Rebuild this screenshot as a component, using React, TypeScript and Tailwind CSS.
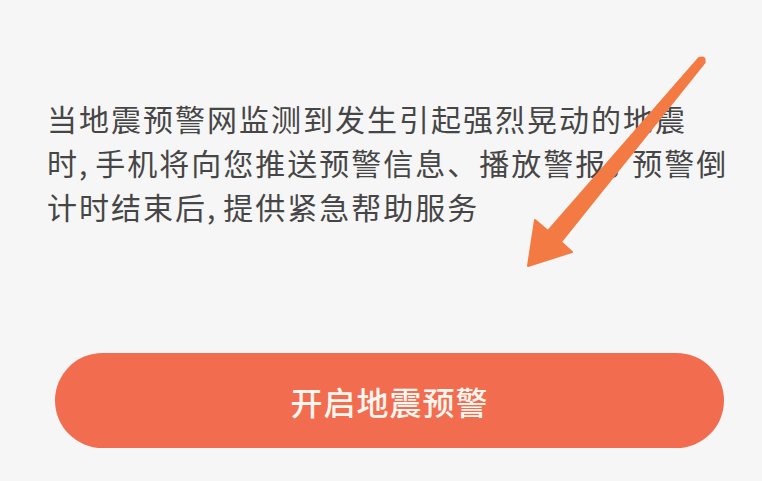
import React from "react";

export default function App() {
  const font = '"Noto Sans CJK SC", "Noto Sans", sans-serif';
  return (
    <div className="relative w-[762px] h-[481px] overflow-hidden bg-[#f6f6f6]" style={{ fontFamily: font }}>
      <div className="pt-[96px] pl-[47px] text-[30px] leading-[44px] tracking-[2px] font-normal text-[#464646] whitespace-nowrap">
        <div>当地震预警网监测到发生引起强烈晃动的地震</div>
        <div>
          时,<span className="ml-[6px]">手机将向您推送预警信息、播放警报</span>
          <span className="tracking-[-8px]">。</span>
          <span className="ml-[3px]">预警倒</span>
        </div>
        <div>
          计时结束后,<span className="ml-[6px]">提供紧急帮助服务</span>
        </div>
      </div>
      <div className="mt-[125px] ml-[55px] w-[669px] h-[95px] rounded-full bg-[#f26d4f] flex items-center justify-center">
        <span className="text-[32px] tracking-[1px] font-medium text-[#fff6f0]">开启地震预警</span>
      </div>
      <svg className="absolute left-0 top-0 pointer-events-none" width="762" height="481" viewBox="0 0 762 481">
        <polygon
          points="699.3,57.7 548,231 535,220 528,266 572,252 561,242 704.7,62.3"
          fill="#f47a44"
          strokeLinejoin="round"
          stroke="#f47a44"
          strokeWidth="2"
        />
        <circle cx="702" cy="60" r="3.6" fill="#f47a44" />
      </svg>
    </div>
  );
}
